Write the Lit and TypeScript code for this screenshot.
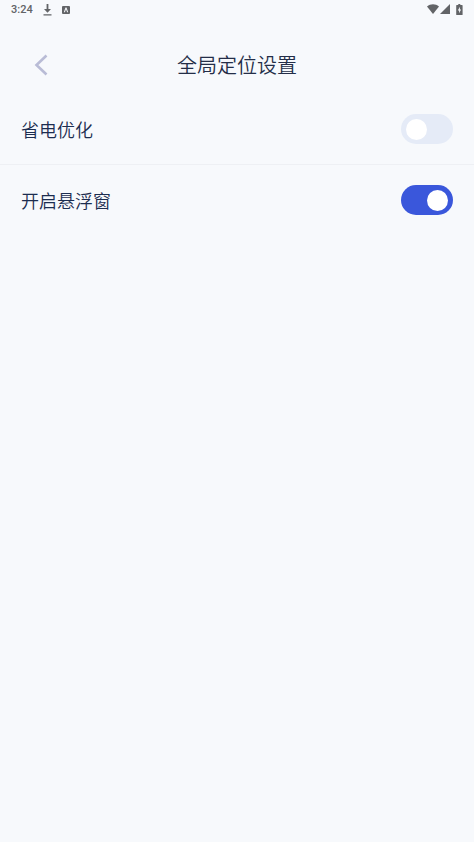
import { LitElement, html, css } from "lit";
import { customElement, property, state } from "lit/decorators.js";

@customElement("status-bar")
class StatusBar extends LitElement {
  static styles = css`
    :host {
      display: flex;
      align-items: flex-start;
      justify-content: space-between;
      height: 20px;
      padding: 0 11px;
      color: #626467;
      font: 500 11px/20px Roboto, "Noto Sans", sans-serif;
    }
    .group {
      display: flex;
      align-items: center;
    }
    .left {
      gap: 10px;
      height: 20px;
    }
    .right {
      gap: 1px;
      height: 18px;
    }
    svg {
      display: block;
      fill: currentColor;
    }
    .battery {
      margin-left: 5px;
    }
  `;

  render() {
    return html`
      <div class="group left">
        <span>3:24</span>
        <svg width="9" height="12" viewBox="0 0 9 12" aria-hidden="true">
          <path d="M3.600 0h1.800v5H8L4.500 8.700 1 5h2.600zM.5 10.200h8v1.200h-8z" />
        </svg>
        <svg width="8" height="8" viewBox="0 0 8 8" aria-hidden="true">
          <path
            fill-rule="evenodd"
            d="M1 0h6a1 1 0 0 1 1 1v6a1 1 0 0 1-1 1H1a1 1 0 0 1-1-1V1a1 1 0 0 1 1-1zM3.500 1.600 1.800 6.200h1.100L4 3.200l1.100 3h1.100L4.500 1.600z"
          />
        </svg>
      </div>
      <div class="group right">
        <svg width="12" height="10" viewBox="0 0 12 10" aria-hidden="true">
          <path d="M0 2.500C3.500 -.5 8.500 -.5 12 2.500L6 10z" />
        </svg>
        <svg width="10" height="10" viewBox="0 0 10 10" aria-hidden="true">
          <path d="M10 0v10H0z" />
        </svg>
        <svg class="battery" width="7" height="11" viewBox="0 0 7 11" aria-hidden="true">
          <path
            fill-rule="evenodd"
            d="M2.300 0h2v1H6a.6.6 0 0 1 .6.6v8.800a.6.6 0 0 1-.6.6H.8a.6.6 0 0 1-.6-.6V1.600A.6.6 0 0 1 .8 1h1.500zM3.900 2.700 1.800 6.400h1.300v2.900L5.100 5.500H3.900z"
          />
        </svg>
      </div>
    `;
  }
}

@customElement("setting-row")
class SettingRow extends LitElement {
  @property() label = "";
  @property({ type: Boolean }) checked = false;

  static styles = css`
    :host {
      display: block;
    }
    .row {
      display: flex;
      align-items: center;
      justify-content: space-between;
      height: 70px;
      padding: 0 21px;
      color: #1c2d50;
      font-size: 18px;
      line-height: 28px;
      cursor: pointer;
    }
    .switch {
      appearance: none;
      display: flex;
      align-items: center;
      box-sizing: border-box;
      width: 52px;
      height: 30px;
      margin: 0;
      padding: 0 5px;
      border-radius: 15px;
      background: #e5ebf7;
      cursor: pointer;
    }
    .switch::before {
      content: "";
      width: 21px;
      height: 21px;
      border-radius: 50%;
      background: #fff;
    }
    .switch:checked {
      justify-content: flex-end;
      background: #3a57db;
    }
  `;

  private toggle(e: Event) {
    this.checked = (e.target as HTMLInputElement).checked;
  }

  render() {
    return html`
      <label class="row">
        <span>${this.label}</span>
        <input
          class="switch"
          type="checkbox"
          role="switch"
          .checked=${this.checked}
          @change=${this.toggle}
        />
      </label>
    `;
  }
}

@customElement("app-root")
class AppRoot extends LitElement {
  @state() private settings = [
    { label: "省电优化", on: false },
    { label: "开启悬浮窗", on: true },
  ];

  static styles = css`
    :host {
      display: block;
      min-height: 100vh;
      background: #f7f9fc;
      font-family: "Noto Sans CJK SC DemiLight", "Noto Sans CJK SC", sans-serif;
      font-weight: 350;
    }
    .header {
      display: grid;
      grid-template-columns: 40px 1fr 40px;
      align-items: center;
      height: 58px;
      margin-top: 16px;
      padding: 0 21px;
    }
    .back {
      display: flex;
      align-items: center;
      justify-content: center;
      width: 40px;
      height: 40px;
      padding: 0;
      border: 0;
      background: none;
      cursor: pointer;
    }
    .back svg {
      fill: none;
      stroke: #b9bcd6;
      stroke-width: 2.6;
    }
    .title {
      margin: 0;
      color: #242e48;
      font-size: 20px;
      font-weight: 350;
      line-height: 30px;
      text-align: center;
    }
    setting-row + setting-row {
      border-top: 1px solid #eef0f4;
    }
  `;

  render() {
    return html`
      <status-bar></status-bar>
      <header class="header">
        <button class="back" type="button" aria-label="返回">
          <svg width="14" height="22" viewBox="0 0 14 22" aria-hidden="true">
            <path d="M12.500 1.500 2.500 11l10 9.500" />
          </svg>
        </button>
        <h1 class="title">全局定位设置</h1>
      </header>
      <main>
        ${this.settings.map(
          (s) => html`<setting-row .label=${s.label} .checked=${s.on}></setting-row>`
        )}
      </main>
    `;
  }
}
